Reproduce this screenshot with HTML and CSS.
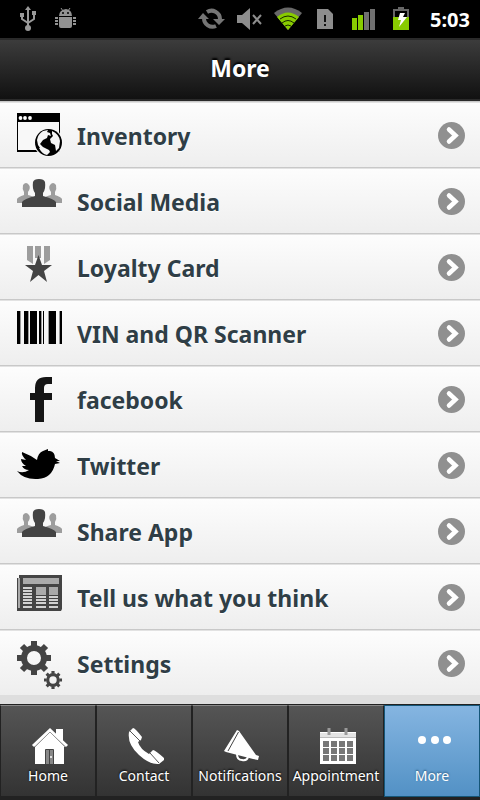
FILE: index.html
```html
<!DOCTYPE html>
<html lang="en">
<head>
  <meta charset="UTF-8" />
  <title>More</title>
  <meta name="viewport" content="width=device-width, initial-scale=1" />
  <link rel="stylesheet" href="styles.css">
</head>
<body>
  <svg class="defs" aria-hidden="true">
    <symbol id="arrow" viewBox="0 0 27 27">
      <circle cx="13.5" cy="13.5" r="13.5" fill="#909090"/>
      <path d="M11 7.500l6.500 6-6.500 6" fill="none" stroke="#fff" stroke-width="4.500" stroke-linecap="round"/>
    </symbol>
    <symbol id="people" viewBox="0 0 45 28">
      <path fill="#9d9d9d" d="M0 24v-4q1-2 7-4v-3q-2-3-1-7 3-4 6 0 2 3-1 7v3q6 1 7 4v4zM45 24v-4q-1-2-7-4v-3q2-3 1-7-3-4-6 0-2 3 1 7v3q-6 1-7 4v4z"/>
      <path fill="#444" d="M5 28v-5q2-3 13-6v-3q-3-4-2-11 1-3 6-3t6 3q1 7-2 11v3q11 3 13 6v5z"/>
    </symbol>
  </svg>

  <div class="status">
    <svg class="status-left" width="60" height="26" viewBox="0 0 60 26">
      <g fill="none" stroke="#999" stroke-width="2">
        <path d="M10 2v20M4 10v3l6 4M16 8v5l-6 4"/>
      </g>
      <path fill="#999" d="M7 4l3-4 3 4zM2 7h4v4H2zM14 5h4v4h-4z"/>
      <circle cx="10" cy="22" r="3" fill="#999"/>
      <g fill="#929292">
        <path d="M41 10q0-6 7-7 6 1 6 7zM41 11h13v9q0 2-2 2h-9q-2 0-2-2zM37 11h3v2h-3zM37 14h3v2h-3zM37 17h3v2h-3zM55 11h3v2h-3zM55 14h3v2h-3zM55 17h3v2h-3z"/>
        <path d="M43 2l2 3M52 2l-2 3" stroke="#929292"/>
      </g>
      <circle cx="45" cy="7" r="1" fill="#000"/><circle cx="50" cy="7" r="1" fill="#000"/>
    </svg>
    <svg class="status-right" width="214" height="26" viewBox="0 0 214 26">
      <g fill="none" stroke="#757575" stroke-width="4">
        <path d="M8 6a8.500 8.500 0 0 1 13 7M17 20A8.500 8.500 0 0 1 5 12"/>
      </g>
      <path fill="#757575" d="M-1 13l5-6 6 6zM14 13h12l-6 6z"/>
      <path fill="#8d8d8d" d="M38 9h5l8-7v22l-8-7h-5z"/>
      <path d="M54 9l8 9M62 9l-8 9" stroke="#8d8d8d" stroke-width="2"/>
      <path d="M89 24L75 7q14-11 28 0z" fill="#686868"/>
      <path d="M89 24L78 11q11-9 22 0z" fill="#8c0"/>
      <path d="M81 13q8-6 16 0M83 17q6-5 12 0M86 20q3-2 6 0" stroke="#162500" fill="none"/>
      <path fill="#8d8d8d" d="M118 3h11l5 5v15h-16z"/>
      <path fill="#111" d="M125 9h2v7h-2zM125 18h2v2h-2z"/>
      <path fill="#8c0" d="M153 12h5v12h-5zM159 9h5v15h-5z"/>
      <path fill="#707070" d="M165 6h5v18h-5zM171 3h5v21h-5z"/>
      <path d="M195 12V4h14v8M199 2h6" stroke="#666" stroke-width="2" fill="none"/>
      <path fill="#8c0" d="M194 11h16v13h-16z"/>
      <path fill="#fff" d="M201 7h5l-2 4h4l-8 10 2-7h-3z"/>
    </svg>
    <time>5:03</time>
  </div>

  <header class="header">
    <h1>More</h1>
  </header>

  <ul class="list">
    <li><a href="#inventory">
      <svg class="icon" viewBox="0 0 45 48">
        <path d="M0 0h43v39H0z"/>
        <path fill="#f8f8f8" d="M1 9h41v28H1z"/>
        <g fill="#fff"><circle cx="3.500" cy="5" r="1.900"/><circle cx="8" cy="5" r="1.900"/><circle cx="13" cy="5" r="1.900"/></g>
        <circle cx="31.500" cy="29.500" r="14.500" fill="#f8f8f8"/>
        <circle cx="31.500" cy="29.500" r="13.500"/>
        <path fill="#f5f5f5" d="M20 27q1-6 6-9l5-1-1 2 3 1 1 3-3-1-1 3-4 2-3 4 3 3-3 1-2-3zM22 35l4-1 6 3 1 2-3 3q-5-1-8-7zM35 18q7 3 8 10l-1 7-3 3-1-6-4-2-1-4 3-3-1-2z"/>
      </svg>
      <span>Inventory</span><svg class="arrow"><use href="#arrow"/></svg>
    </a></li>
    <li><a href="#social">
      <svg class="icon" viewBox="0 0 45 48"><use href="#people" width="45" height="28"/></svg>
      <span>Social Media</span><svg class="arrow"><use href="#arrow"/></svg>
    </a></li>
    <li><a href="#loyalty">
      <svg class="icon" viewBox="0 0 45 48">
        <path fill="#9d9d9d" d="M10 1h6v18l-6-4zM18 1h6v12h-6zM27 1h6v14l-6 4z"/>
        <path fill="#444" d="M21.500 10l3.500 10h10l-8 6 3 11-8.500-7-8.500 7 3-11-8-6h10z"/>
      </svg>
      <span>Loyalty Card</span><svg class="arrow"><use href="#arrow"/></svg>
    </a></li>
    <li><a href="#scanner">
      <svg class="icon" viewBox="0 0 45 48">
        <path d="M0 0h3v33H0zM7 0h4v33H7zM13 0h7v33h-7zM22 0h2v33h-2zM26 0h1v33h-1zM32 0h7v33h-7zM43 0h2v33h-2z"/>
        <path fill="#999" d="M3 0h1v33H3zM11 0h1v33h-1zM24 0h1v33h-1zM31 0h1v33h-1zM42 0h1v33h-1z"/>
      </svg>
      <span>VIN and QR Scanner</span><svg class="arrow"><use href="#arrow"/></svg>
    </a></li>
    <li><a href="#facebook">
      <svg class="icon" viewBox="0 0 45 48">
        <path fill="#151515" d="M18 45V23h-5v-7h5v-5Q18 0 29 0h6v7h-4q-4 0-4 4v5h8v7h-8v22z"/>
      </svg>
      <span>facebook</span><svg class="arrow"><use href="#arrow"/></svg>
    </a></li>
    <li><a href="#twitter">
      <svg class="icon" viewBox="0 0 45 48">
        <path d="M0 28q6 3 12-1-5 0-7-4h4q-5-3-5-7l5 1Q4 12 5 9q8 3 15 8 1-7 6-9l5-2v2h2q5 1 5 7l5 3h-4l4 2-5 1q-3 14-17 15Q7 37 0 28z"/>
      </svg>
      <span>Twitter</span><svg class="arrow"><use href="#arrow"/></svg>
    </a></li>
    <li><a href="#share">
      <svg class="icon" viewBox="0 0 45 48"><use href="#people" width="45" height="28"/></svg>
      <span>Share App</span><svg class="arrow"><use href="#arrow"/></svg>
    </a></li>
    <li><a href="#feedback">
      <svg class="icon" viewBox="0 0 45 48">
        <path fill="#444" d="M0 3h2V0h43v34l-1 2H0z"/>
        <path fill="#aaa" d="M1 3h2v30H1zM6 3h36v6H6zM19 12h10v8H19zM32 12h9v8h-9z"/>
        <path stroke="#fff" stroke-width="1.500" d="M6 13h9M6 16h9M6 19h9M6 22h9M6 25h9M6 28h9M6 32h9M19 22h10M19 25h10M19 28h10M19 32h10M32 22h9M32 25h9M32 28h9M32 32h9"/>
      </svg>
      <span>Tell us what you think</span><svg class="arrow"><use href="#arrow"/></svg>
    </a></li>
    <li><a href="#settings">
      <svg class="icon" viewBox="0 0 45 48">
        <g id="gear" fill="none" stroke="#444">
          <circle cx="17" cy="17" r="10" stroke-width="6"/>
          <path stroke-width="6" d="M17 0v5M17 29v5M0 17h5M29 17h5M5 5l4 4M25 25l4 4M29 5l-4 4M9 25l-4 4"/>
        </g>
        <use href="#gear" transform="translate(27 30) scale(.53)"/>
      </svg>
      <span>Settings</span><svg class="arrow"><use href="#arrow"/></svg>
    </a></li>
  </ul>

  <nav class="tabs">
    <a href="#home">
      <svg viewBox="0 0 36 36">
        <path fill="#fff" d="M3 18L18 4l14 14v18H3zM24 1h7v14l-7-7z"/>
        <path d="M1 18L18 2l17 16" fill="none" stroke="#fff" stroke-width="3"/>
        <path d="M3 19L18 4l15 15" fill="none" stroke="#999"/>
        <path fill="#888" stroke="#444" d="M13.500 36V21.500h8V36M17.500 22v14"/>
        <circle cx="19" cy="29" r="1" fill="#fff"/>
      </svg>
      Home
    </a>
    <a href="#contact">
      <svg viewBox="0 0 36 36">
        <path fill="#fff" d="M1 4l4-4q2 0 9 9l-1 3-3 2q2 7 11 12l4-4q2 0 11 8v2l-5 4Q22 37 11 27-1 16 1 4z"/>
        <path d="M2 3l10 10M22 25l9 10" stroke="#555"/>
      </svg>
      Contact
    </a>
    <a href="#notifications">
      <svg viewBox="0 0 36 36">
        <path fill="#fff" d="M13 2l2 1 17 24 3 1-1 4-5-1-27-7-2-1z"/>
        <path d="M14.500 4L4 23" stroke="#444"/>
        <path d="M13 26q0 6 5 6 5 1 6-3" fill="none" stroke="#fff" stroke-width="2"/>
      </svg>
      Notifications
    </a>
    <a href="#appointment">
      <svg viewBox="0 0 36 36">
        <path fill="#fff" d="M0 4h36v32H0z"/>
        <path fill="#e4e4e4" d="M0 5h36v4H0z"/>
        <path stroke="#bbb" d="M0 9.500h36"/>
        <path stroke="#999" stroke-width="3" d="M9 0v7M26 0v7"/>
        <path fill="#777" d="M3 13h6v6H3zM11 13h6v6h-6zM19 13h6v6h-6zM27 13h6v6h-6zM3 20h6v6H3zM11 20h6v6h-6zM19 20h6v6h-6zM27 20h6v6h-6zM3 27h6v6H3zM11 27h6v6h-6zM19 27h6v6h-6zM27 27h6v6h-6z"/>
      </svg>
      Appointment
    </a>
    <a href="#more" class="active" aria-current="page">
      <svg viewBox="0 0 36 36">
        <g fill="#fff"><circle cx="6" cy="12" r="4"/><circle cx="19" cy="12" r="4"/><circle cx="31" cy="12" r="4"/></g>
      </svg>
      More
    </a>
  </nav>
</body>
</html>
```

FILE: styles.css
```css
* {
  box-sizing: border-box;
}
body {
  margin: 0;
  min-height: 100vh;
  display: flex;
  flex-direction: column;
  background: #dedede;
  font-family: "Noto Sans", "Open Sans", sans-serif;
}
svg {
  display: block;
  flex: none;
  overflow: visible;
}
a {
  color: inherit;
  text-decoration: none;
}
.defs {
  display: none;
}

/* status bar */
.status {
  display: flex;
  align-items: center;
  height: 38px;
  padding: 0 10px 0 18px;
  background: #000;
  color: #fff;
  font-size: 20px;
  font-weight: bold;
}
.status-right {
  margin-left: auto;
  margin-right: 17px;
}

/* title bar */
.header {
  height: 63px;
  border-top: 2px solid #2a2a2a;
  border-bottom: 2px solid #2a2a2a;
  background: linear-gradient(#3c3c3c, #111);
  color: #fff;
  text-align: center;
}
.header h1 {
  margin: 0;
  font-size: 23px;
  line-height: 56px;
  text-shadow: 0 -2px 2px #000;
}

/* menu rows */
.list {
  margin: 0;
  padding: 0;
  list-style: none;
}
.list a {
  display: flex;
  align-items: center;
  height: 66px;
  padding: 2px 15px 0 17px;
  border-top: 1px solid #c8c8c8;
  background: linear-gradient(#fdfdfd, #eee);
  box-shadow: inset 0 1px #e2e2e2;
  color: #2f3e46;
  font-size: 23px;
  font-weight: bold;
  text-shadow: 0 1px 1px #fff;
}
.list span {
  flex: 1;
  margin-left: 15px;
}
.icon {
  width: 45px;
  height: 48px;
  margin-top: 2px;
}
.arrow {
  width: 27px;
  height: 27px;
}

/* bottom tabs */
.tabs {
  display: grid;
  grid-template-columns: repeat(5, 1fr);
  margin-top: auto;
  border-top: 1px solid #222;
  border-bottom: 3px solid #222;
  background: #222;
}
.tabs a {
  display: flex;
  flex-direction: column;
  align-items: center;
  height: 92px;
  padding-top: 22px;
  border: 1px solid #222;
  border-top-color: #888;
  background: linear-gradient(#555, #333);
  color: #fff;
  font-size: 14px;
  line-height: 24px;
  text-shadow: 0 -1px 2px #000;
}
.tabs svg {
  width: 36px;
  height: 36px;
  margin-left: 4px;
}
.tabs .active {
  border-color: #155678;
  background: linear-gradient(#85b5e1, #5291c5);
  text-shadow: 0 -1px 2px #2a5a80;
}
```
